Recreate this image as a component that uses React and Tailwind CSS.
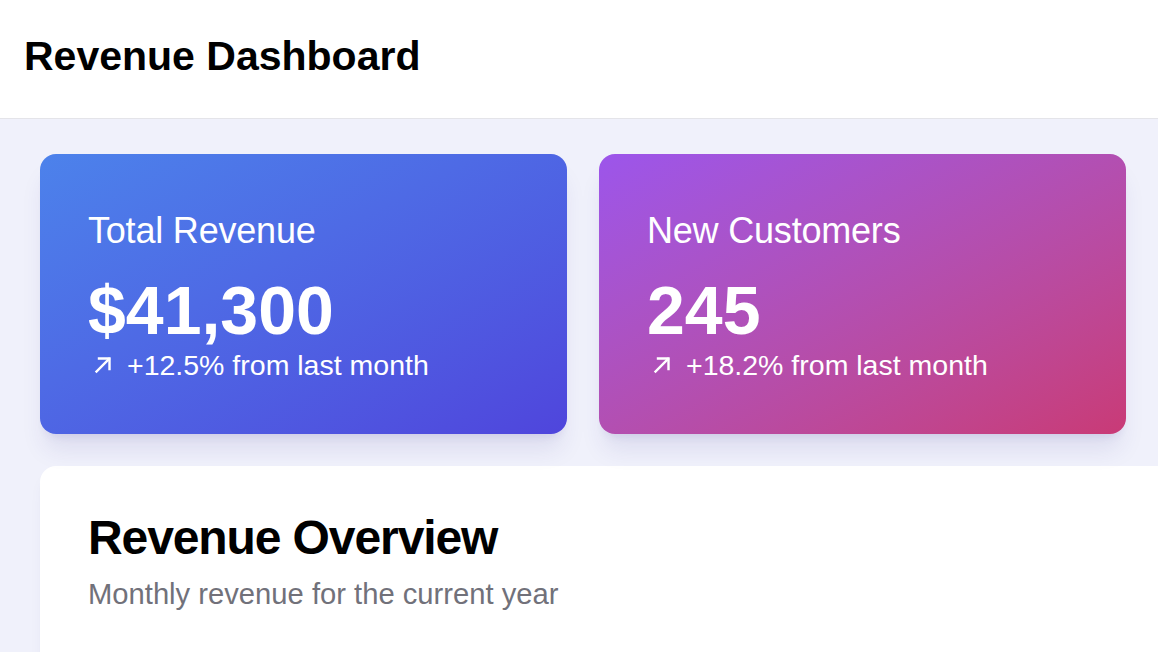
import { ArrowUpRight } from 'lucide-react';

const stats = [
  {
    title: 'Total Revenue',
    value: '$41,300',
    change: '+12.5% from last month',
    bg: 'bg-linear-to-br from-[#4c82eb] to-[#4f45dc]',
  },
  {
    title: 'New Customers',
    value: '245',
    change: '+18.2% from last month',
    bg: 'bg-linear-to-br from-[#9c55eb] to-[#c93a76]',
  },
];

function UpArrow() {
  return (
    <svg width="18" height="18" viewBox="0 0 18 18" fill="none" stroke="currentColor" strokeWidth="2.4" strokeLinecap="square" className="ml-[6px] shrink-0">
      <path d="M2.5 15.5 15 3" />
      <path d="M5 2.5h10.5V13" />
    </svg>
  );
}

function StatCard({ stat }) {
  return (
    <div className={`${stat.bg} w-[527px] h-[280px] shrink-0 rounded-2xl pt-[59px] px-12 text-white shadow-xl shadow-indigo-900/10`}>
      <h3 className="text-[36px] leading-none tracking-[-0.2px]">{stat.title}</h3>
      <p className="mt-[27px] text-[68px] leading-none font-bold">{stat.value}</p>
      <div className="mt-[7px] flex items-center">
        <UpArrow />
        <span className="ml-[15px] text-[28.5px] leading-none">{stat.change}</span>
      </div>
    </div>
  );
}

export default function App() {
  return (
    <div className="w-[1158px] h-[652px] overflow-hidden bg-[#f0f1fb] font-['Liberation_Sans',Arial,sans-serif] text-black">
      <header className="h-[119px] bg-white border-b border-[#e4e4e9] flex items-center px-6 pb-[6px]">
        <h1 className="text-[41px] leading-none font-bold">Revenue Dashboard</h1>
      </header>

      <main className="pt-[35px] px-10">
        <div className="flex gap-8">
          {stats.map((s) => (
            <StatCard key={s.title} stat={s} />
          ))}
        </div>

        <section className="mt-8 w-[1200px] h-[400px] bg-white rounded-2xl shadow-lg shadow-indigo-900/5 pt-12 px-12">
          <h2 className="text-[48px] leading-none font-bold tracking-[-1.1px]">Revenue Overview</h2>
          <p className="mt-[18px] text-[29.2px] leading-none text-[#71717a]">Monthly revenue for the current year</p>
        </section>
      </main>
    </div>
  );
}
